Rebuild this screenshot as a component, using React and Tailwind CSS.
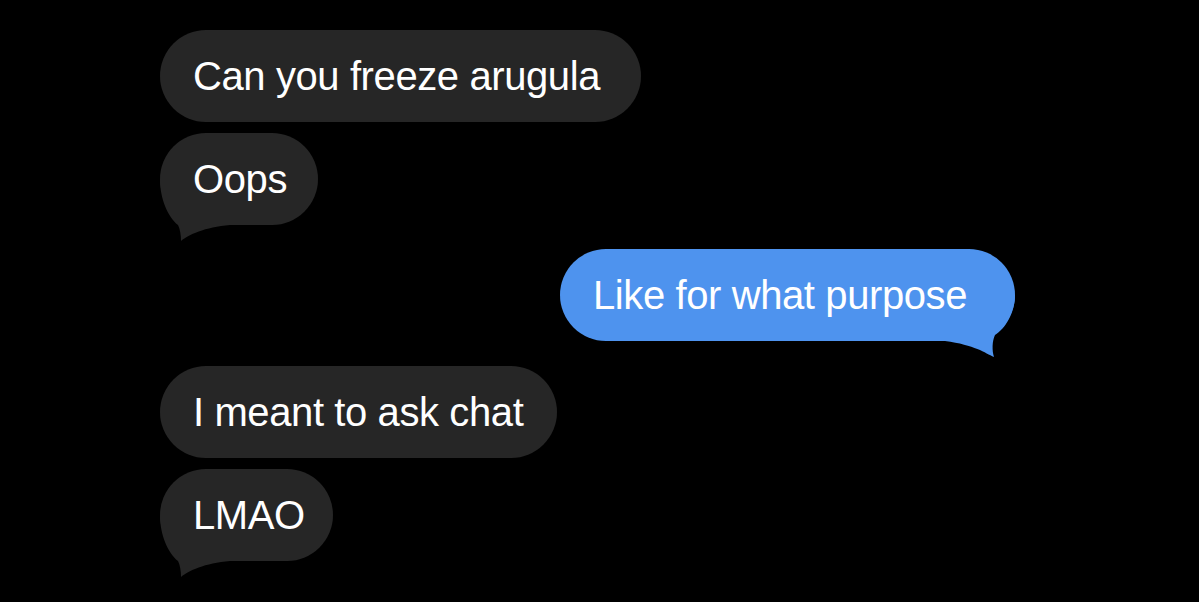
import React from 'react';

const messages = [
  { id: 1, text: 'Can you freeze arugula', mine: false, width: 'w-[481px]', gap: 'mt-0' },
  { id: 2, text: 'Oops', mine: false, tail: true, width: 'w-[158px]', gap: 'mt-[11px]' },
  { id: 3, text: 'Like for what purpose', mine: true, tail: true, width: 'w-[455px]', gap: 'mt-[24px]' },
  { id: 4, text: 'I meant to ask chat', mine: false, width: 'w-[397px]', gap: 'mt-[25px]' },
  { id: 5, text: 'LMAO', mine: false, tail: true, width: 'w-[173px]', gap: 'mt-[11px]' },
];

function Tail({ mine }) {
  // tail hangs from the lower corner of the last bubble in a run
  if (mine) {
    return (
      <svg className="absolute right-0 top-[46px]" width="70" height="62" viewBox="0 0 70 62">
        <path d="M70 0 C70 18, 60 34, 50 40 C47 46, 47 56, 49 62 C40 58, 30 50, 0 46 L0 0 Z" fill="#4e93ee" />
      </svg>
    );
  }
  return (
    <svg className="absolute left-0 top-[46px]" width="70" height="62" viewBox="0 0 70 62">
      <path d="M0 0 C0 20, 8 38, 18 46 C20 50, 21 56, 21 62 C28 56, 45 48, 70 46 L70 0 Z" fill="#262626" />
    </svg>
  );
}

function Bubble({ msg }) {
  return (
    <div
      className={`relative ${msg.width} ${msg.gap} ${msg.mine ? 'self-end bg-[#4e93ee]' : 'self-start bg-[#262626]'} h-[92px] rounded-[46px] flex items-center pl-[33px]`}
    >
      {msg.tail && <Tail mine={msg.mine} />}
      <span className="relative text-white text-[40px] leading-[46px] tracking-[-0.4px] whitespace-nowrap">
        {msg.text}
      </span>
    </div>
  );
}

export default function App() {
  return (
    <div
      className="w-full h-screen bg-black overflow-hidden flex flex-col pl-[160px] pr-[184px] pt-[30px]"
      style={{ fontFamily: '"Liberation Sans", Arial, sans-serif' }}
    >
      {messages.map((m) => (
        <Bubble key={m.id} msg={m} />
      ))}
    </div>
  );
}
